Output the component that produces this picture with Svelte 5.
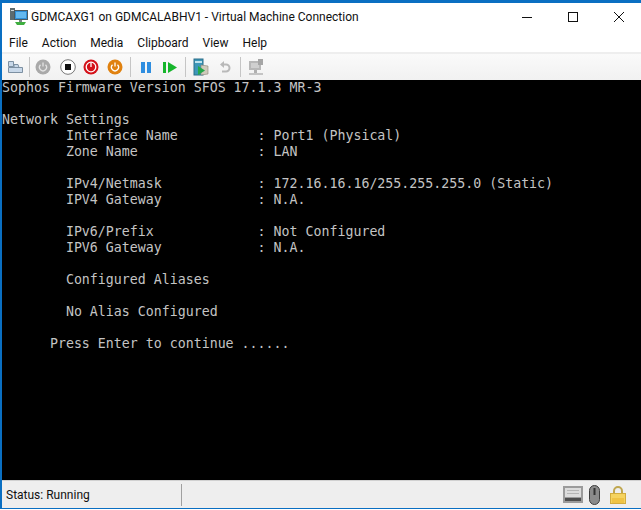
<script>
    const menus = ["File", "Action", "Media", "Clipboard", "View", "Help"];

    const lines = [
        "Sophos Firmware Version SFOS 17.1.3 MR-3",
        "",
        "Network Settings",
        "        Interface Name          : Port1 (Physical)",
        "        Zone Name               : LAN",
        "",
        "        IPv4/Netmask            : 172.16.16.16/255.255.255.0 (Static)",
        "        IPV4 Gateway            : N.A.",
        "",
        "        IPv6/Prefix             : Not Configured",
        "        IPV6 Gateway            : N.A.",
        "",
        "        Configured Aliases",
        "",
        "        No Alias Configured",
        "",
        "      Press Enter to continue ......"
    ];
</script>

<div class="window">
    <header class="title">
        <svg class="appicon" width="18" height="17" viewBox="0 0 18 17">
            <rect x="0" y="0" width="5" height="12" fill="#5d6b6e" />
            <rect x="1" y="2" width="3" height="1" fill="#cfd6d8" />
            <rect x="4.500" y="2.500" width="13" height="9" fill="#2f8fd8" stroke="#4a5a60" />
            <rect x="6" y="4" width="10" height="6" fill="#63b8ee" />
            <rect x="9" y="12" width="3" height="2" fill="#7a8488" />
            <path d="M5 14h11l-2 3H7z" fill="#3fae3f" />
        </svg>
        <span class="caption">GDMCAXG1 on GDMCALABHV1 - Virtual Machine Connection</span>
        <div class="winbtns">
            <svg width="12" height="12" viewBox="0 0 12 12"><path d="M1 6.500h10" stroke="#111" /></svg>
            <svg width="12" height="12" viewBox="0 0 12 12"><rect x="1.500" y="1.500" width="9" height="9" fill="none" stroke="#111" /></svg>
            <svg width="12" height="12" viewBox="0 0 12 12"><path d="M1 1l10 10M11 1L1 11" stroke="#111" /></svg>
        </div>
    </header>

    <nav class="menu">
        {#each menus as item}
            <span>{item}</span>
        {/each}
    </nav>

    <div class="toolbar">
        <svg class="tool" width="16" height="16" viewBox="0 0 16 16">
            <path d="M1.500 2.500h5v5h-5zM1.500 8.500h14v5h-14zM7 5.500h4l1 3H7z" fill="#c9d9ea" stroke="#7d90a2" />
        </svg>
        <i class="sep first"></i>
        <svg class="power" width="16" height="16" viewBox="0 0 16 16">
            <circle cx="8" cy="8" r="7.500" fill="#a9a9a9" />
            <path d="M5.500 5.800a3.500 3.500 0 1 0 5 0M8 3.500v4" fill="none" stroke="#e4e4e4" stroke-width="1.300" />
        </svg>
        <svg class="stop" width="16" height="16" viewBox="0 0 16 16">
            <circle cx="8" cy="8" r="7.300" fill="#fff" stroke="#777" />
            <rect x="5" y="5" width="6" height="6" fill="#111" />
        </svg>
        <svg width="16" height="16" viewBox="0 0 16 16">
            <circle cx="8" cy="8" r="7.500" fill="#d4121a" />
            <circle cx="8" cy="8" r="4.800" fill="none" stroke="#fff" stroke-width="1.300" />
            <path d="M8 3.500v4.500" stroke="#fff" stroke-width="1.300" />
        </svg>
        <svg class="shut" width="16" height="16" viewBox="0 0 16 16">
            <circle cx="8" cy="8" r="7.500" fill="#e0810f" />
            <path d="M5.500 5.800a3.500 3.500 0 1 0 5 0M8 3.500v4" fill="none" stroke="#fff" stroke-width="1.300" />
        </svg>
        <i class="sep"></i>
        <svg class="tool" width="16" height="16" viewBox="0 0 16 16">
            <rect x="3" y="3" width="4" height="11" fill="#2f8ee0" />
            <rect x="9" y="3" width="4" height="11" fill="#2f8ee0" />
        </svg>
        <svg class="play" width="16" height="16" viewBox="0 0 16 16">
            <rect x="1" y="3" width="3" height="11" fill="#16b52c" />
            <path d="M6 3l9 5.500L6 14z" fill="#16b52c" />
        </svg>
        <i class="sep"></i>
        <svg class="tool" width="16" height="18" viewBox="0 0 16 18">
            <rect x="1" y="1" width="9" height="16" fill="#3d97b8" stroke="#2a6f8a" />
            <rect x="2" y="3" width="7" height="2" fill="#bfe3ee" />
            <path d="M8 7l7 1v8l-7 1z" fill="#cfcabb" stroke="#8a8577" stroke-width=".6" />
            <path d="M5 8l7 4.500L5 17z" fill="#24a84a" />
        </svg>
        <svg class="undo" width="16" height="16" viewBox="0 0 16 16">
            <path d="M5 5.500h4a3.500 3.500 0 0 1 0 7H5" fill="none" stroke="#b9b9b9" stroke-width="2" />
            <path d="M7 2v7L3 5.500z" fill="#b9b9b9" />
        </svg>
        <i class="sep"></i>
        <svg class="tool" width="16" height="18" viewBox="0 0 16 18">
            <rect x="1" y="3" width="12" height="9" fill="#b7b7b7" />
            <rect x="3" y="5" width="8" height="5" fill="#cfcfcf" />
            <rect x="10" y="1" width="5" height="6" fill="#a5a5a5" />
            <rect x="6" y="12" width="3" height="3" fill="#b0b0b0" />
            <rect x="1" y="15" width="14" height="2" fill="#c4c4c4" />
        </svg>
    </div>

    <pre class="console">{lines.join("\n")}</pre>

    <footer class="status">
        <span class="state">Status: Running</span>
        <i class="statsep"></i>
        <div class="tray">
            <svg width="20" height="17" viewBox="0 0 20 17">
                <rect x="0" y="0" width="20" height="17" fill="#9b9b9b" />
                <rect x="2" y="2" width="16" height="9" fill="#dcdcdc" />
                <rect x="4" y="4" width="12" height="1" fill="#b5b5b5" />
                <rect x="4" y="7" width="12" height="1" fill="#b5b5b5" />
                <rect x="2" y="12" width="16" height="3" fill="#4e4e4e" />
            </svg>
            <svg width="11" height="20" viewBox="0 0 11 20">
                <rect x=".5" y=".5" width="10" height="19" rx="5" fill="#8b8b8b" stroke="#3e3e3e" />
                <rect x="4.500" y="3" width="2" height="7" fill="#333" />
            </svg>
            <svg width="16" height="18" viewBox="0 0 16 18">
                <path d="M4 8V5a4 4 0 0 1 8 0v3" fill="none" stroke="#bfa64f" stroke-width="2" />
                <rect x=".5" y="7.500" width="15" height="10" fill="#f5d35f" stroke="#d2ac3e" />
                <rect x="2" y="12" width="12" height="5" fill="#efc344" />
            </svg>
        </div>
    </footer>
</div>

<style>
    :global(body) {
        background: #fff;
        overflow: hidden;
    }

    .window {
        box-sizing: border-box;
        width: 641px;
        height: 509px;
        display: flex;
        flex-direction: column;
        border: solid #0a6fc2;
        border-width: 3px 0 1px 2px;
        background: #fff;
        font-family: Roboto, "Noto Sans", sans-serif;
        color: #111;
    }

    .title {
        height: 27px;
        display: flex;
        align-items: center;
        flex: none;
    }

    .appicon {
        margin-left: 8px;
    }

    .caption {
        margin-left: 3px;
        padding-top: 1px;
        font-size: 12px;
    }

    .winbtns {
        margin-left: auto;
        display: flex;
        gap: 34px;
        margin-right: 16px;
    }

    .menu {
        box-sizing: border-box;
        height: 22px;
        display: flex;
        align-items: center;
        gap: 14px;
        padding: 3px 0 0 7px;
        font-size: 12px;
        flex: none;
    }

    .toolbar {
        height: 28px;
        flex: none;
        display: flex;
        align-items: center;
        box-sizing: border-box;
        border-top: 2px solid #eeeeee;
        background: linear-gradient(#fafafa, #f1f1f1);
        padding-left: 5px;
        gap: 7px;
    }

    .sep {
        width: 1px;
        height: 20px;
        background: #c5c5c5;
    }

    .sep.first {
        margin-left: -1px;
        margin-right: -2px;
    }

    .stop {
        margin-left: 2px;
    }

    .shut {
        margin-left: 1px;
    }

    .play {
        margin-left: 1px;
    }

    .undo {
        margin-left: 1px;
    }

    .console {
        margin: 0;
        flex: 1;
        background: #000;
        color: #c4c4c4;
        font-family: "DejaVu Sans Mono", "Liberation Mono", monospace;
        font-size: 13.280px;
        line-height: 16px;
        overflow: hidden;
    }

    .status {
        height: 28px;
        flex: none;
        display: flex;
        align-items: center;
        background: #eeeeee;
        border-top: 1px solid #d0d0d0;
        box-sizing: border-box;
        font-size: 12px;
    }

    .state {
        margin-left: 4px;
        width: 175px;
    }

    .statsep {
        width: 1px;
        height: 22px;
        background: #a0a0a0;
    }

    .tray {
        margin-left: auto;
        margin-right: 15px;
        display: flex;
        align-items: center;
        gap: 6px;
    }

    .tray svg:last-child {
        margin-left: 4px;
    }
</style>
